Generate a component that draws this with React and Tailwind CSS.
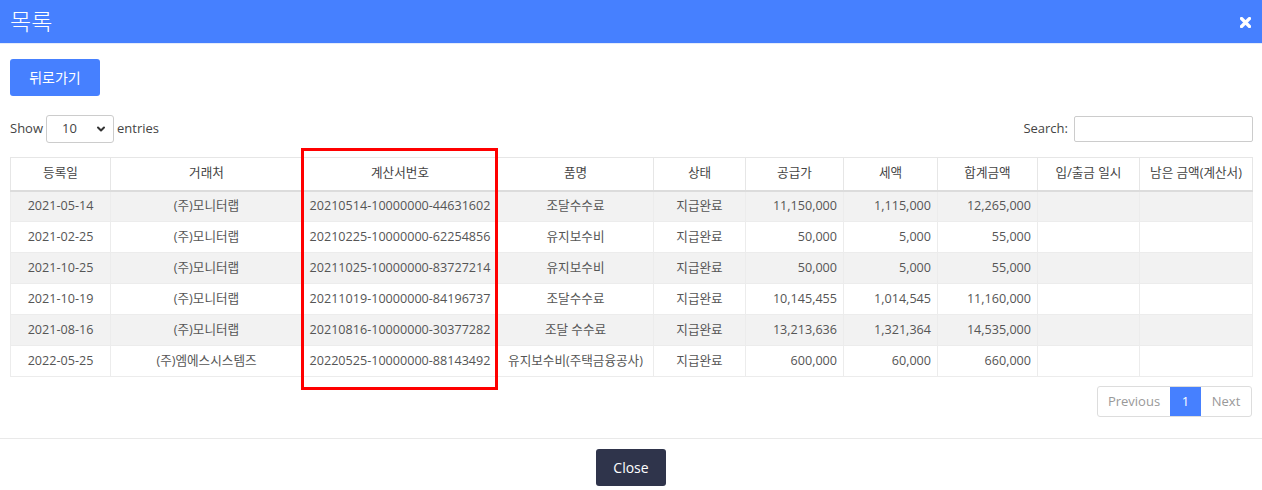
import { ChevronDown } from "lucide-react";

const columns = [
  { label: "등록일", width: "w-[100px]" },
  { label: "거래처", width: "w-[192px]" },
  { label: "계산서번호", width: "w-[195px]" },
  { label: "품명", width: "w-[156px]" },
  { label: "상태", width: "w-[92px]" },
  { label: "공급가", width: "w-[98px]" },
  { label: "세액", width: "w-[94px]" },
  { label: "합계금액", width: "w-[100px]" },
  { label: "입/출금 일시", width: "w-[102px]" },
  { label: "남은 금액(계산서)", width: "w-[113px]" },
];

const rows = [
  ["2021-05-14", "(주)모니터랩", "20210514-10000000-44631602", "조달수수료", "지급완료", "11,150,000", "1,115,000", "12,265,000"],
  ["2021-02-25", "(주)모니터랩", "20210225-10000000-62254856", "유지보수비", "지급완료", "50,000", "5,000", "55,000"],
  ["2021-10-25", "(주)모니터랩", "20211025-10000000-83727214", "유지보수비", "지급완료", "50,000", "5,000", "55,000"],
  ["2021-10-19", "(주)모니터랩", "20211019-10000000-84196737", "조달수수료", "지급완료", "10,145,455", "1,014,545", "11,160,000"],
  ["2021-08-16", "(주)모니터랩", "20210816-10000000-30377282", "조달 수수료", "지급완료", "13,213,636", "1,321,364", "14,535,000"],
  ["2022-05-25", "(주)엠에스시스템즈", "20220525-10000000-88143492", "유지보수비(주택금융공사)", "지급완료", "600,000", "60,000", "660,000"],
];

const App = () => {
  return (
    <div
      className="relative h-[490px] w-[1262px] overflow-hidden bg-white text-[13px] text-[#555]"
      style={{ fontFamily: '"Open Sans", "Noto Sans CJK KR", sans-serif' }}
    >
      <header className="flex h-[44px] items-center justify-between border-b border-[#e4ebfb] bg-[#4680ff] pl-[10px] pr-[11px]">
        <h1 className="text-[23px] font-light leading-none text-white">목록</h1>
        <svg width="11" height="11" viewBox="0 0 11 11" className="mt-[1px]">
          <path d="M1.5 1.5L9.5 9.5M9.5 1.5L1.5 9.5" stroke="white" strokeWidth="3.2" strokeLinecap="round" />
        </svg>
      </header>

      <section className="px-[10px] pt-[15px]">
        <button
          type="button"
          className="h-[37px] w-[90px] rounded-[3px] bg-[#4680ff] text-[14px] text-white"
        >
          뒤로가기
        </button>

        <div className="mt-[19px] flex h-[28px] items-center justify-between">
          <div className="flex items-center gap-[3px] text-[#444]">
            <span>Show</span>
            <div className="flex h-[28px] w-[68px] items-center justify-between rounded-[3px] border border-[#ccc] pl-[15px] pr-[6px] text-[#444]">
              <span>10</span>
              <ChevronDown size={12} strokeWidth={4} className="text-[#333]" />
            </div>
            <span>entries</span>
          </div>
          <div className="flex items-center gap-[6px] text-[#444]">
            <span>Search:</span>
            <div className="mr-[-1px] h-[26px] w-[179px] rounded-[2px] border border-[#ccc]" />
          </div>
        </div>

        <table className="mt-[14px] w-[1242px] table-fixed border-collapse border border-[#e6e6e6] text-[12.6px]">
          <thead>
            <tr className="h-[33px]">
              {columns.map((col) => (
                <th
                  key={col.label}
                  className={`${col.width} border border-b-2 border-[#e6e6e6] border-b-[#dcdcdc] px-[4px] text-center font-normal text-[#444]`}
                >
                  {col.label}
                </th>
              ))}
            </tr>
          </thead>
          <tbody>
            {rows.map((row, i) => (
              <tr key={row[2]} className={i % 2 === 0 ? "h-[31px] bg-[#f2f2f2]" : "h-[31px] bg-white"}>
                {row.map((cell, j) => (
                  <td
                    key={j}
                    className={`border border-[#ececec] whitespace-nowrap ${j >= 5 ? "text-right" : "text-center"} ${j === 3 ? "px-0" : "px-[6px]"}`}
                  >
                    {cell}
                  </td>
                ))}
                <td className="border border-[#ececec]" />
                <td className="border border-[#ececec]" />
              </tr>
            ))}
          </tbody>
        </table>

        <div className="mt-[9px] flex justify-end">
          <div className="flex h-[31px] overflow-hidden rounded-[3px] border border-[#ddd] text-[13px]">
            <span className="flex w-[72px] items-center justify-center text-[#999]">Previous</span>
            <span className="flex w-[31px] items-center justify-center bg-[#4680ff] text-white">1</span>
            <span className="flex w-[50px] items-center justify-center text-[#999]">Next</span>
          </div>
        </div>
      </section>

      <footer className="mt-[21px] flex justify-center border-t border-[#e9e9e9] pt-[10px]">
        <button
          type="button"
          className="h-[37px] w-[70px] rounded-[3px] bg-[#2f344b] text-[14px] text-white"
        >
          Close
        </button>
      </footer>

      <div className="pointer-events-none absolute left-[301px] top-[148px] h-[242px] w-[197px] border-[3px] border-[#ff0000]" />
    </div>
  );
};

export default App;
